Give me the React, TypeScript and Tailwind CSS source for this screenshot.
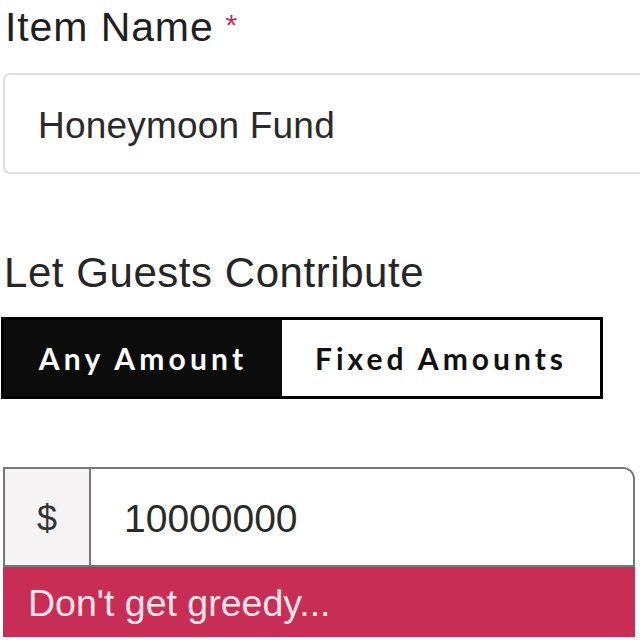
import React from "react";

export default function App() {
  const sans = { fontFamily: '"Liberation Sans", Arial, sans-serif' } as React.CSSProperties;
  return (
    <div className="w-[640px] h-[640px] overflow-hidden bg-white text-[#222]" style={sans}>
      <div className="pl-[5px] pt-[5px] h-[50px] flex items-start">
        <span className="text-[41px] leading-[44px] tracking-[0.9px] text-[#1f1f1f]">Item Name</span>
        <span className="ml-[12px] text-[30px] leading-[40px] text-[#b0325e]">*</span>
      </div>
      <div className="ml-[3px] mt-[23px] w-[700px] h-[101px] border-2 border-[#dedede] rounded-[7px] flex items-center pl-[33px] pt-[4px]">
        <span className="text-[37px] text-[#2a2a2a] tracking-[0.2px]">Honeymoon Fund</span>
      </div>
      <div className="pl-[4px] mt-[75px] h-[48px] flex items-start">
        <span className="text-[42px] leading-[48px] text-[#262626] tracking-[0.55px]">Let Guests Contribute</span>
      </div>
      <div className="ml-[1px] mt-[20px] w-[602px] h-[82px] border-[3px] border-black flex" style={{ fontFamily: 'Lato, "Liberation Sans", sans-serif' }}>
        <div className="w-[278px] bg-[#0c0c0c] flex items-center justify-center">
          <span className="text-[30px] font-bold tracking-[4.2px] text-white">Any Amount</span>
        </div>
        <div className="flex-1 bg-white flex items-center justify-center">
          <span className="text-[30px] font-bold tracking-[4px] text-[#111]">Fixed Amounts</span>
        </div>
      </div>
      <div className="ml-[3px] mt-[68px] w-[632px]">
        <div className="h-[100px] flex border-2 border-[#777] rounded-tr-[12px] overflow-hidden">
          <div className="w-[86px] bg-[#f6f4f4] border-r-2 border-[#777] flex items-center justify-center pt-[4px]">
            <span className="text-[36px] text-[#333]">$</span>
          </div>
          <div className="flex-1 bg-white flex items-center pl-[33px] pt-[4px]">
            <span className="text-[39px] text-[#2a2a2a]">10000000</span>
          </div>
        </div>
        <div className="h-[70px] bg-[#c72d55] flex items-center pl-[25px] pt-[2px]">
          <span className="text-[37.5px] text-[#fbe3ea]">Don't get greedy...</span>
        </div>
      </div>
    </div>
  );
}
